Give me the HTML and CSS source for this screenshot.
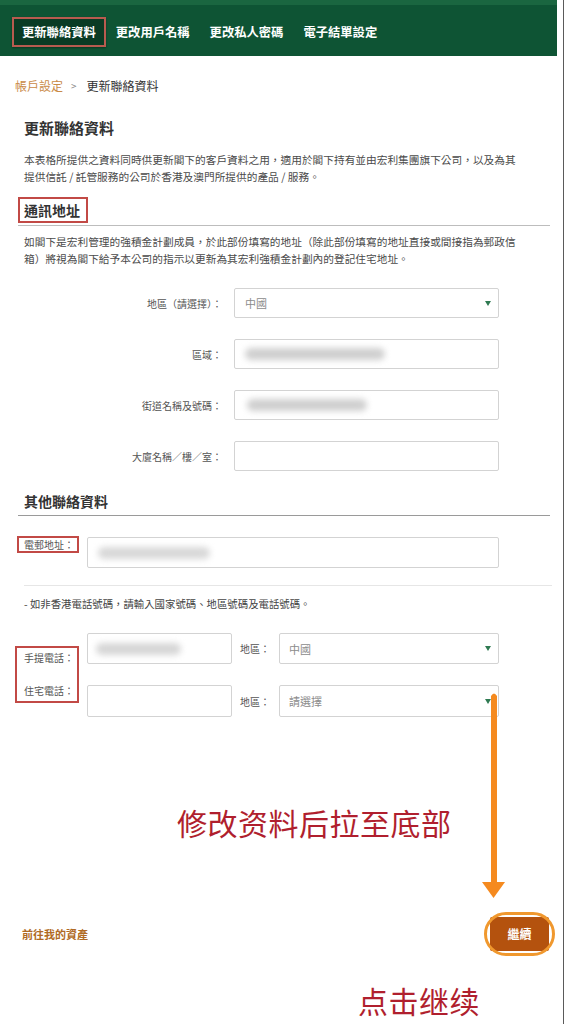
FILE: index.html
```html
<!DOCTYPE html>
<html lang="zh-Hant">
<head>
<meta charset="utf-8">
<title>更新聯絡資料</title>
<link rel="stylesheet" href="styles.css">
</head>
<body>
<div class="page">
  <nav class="nav">
    <span class="tab active">更新聯絡資料</span>
    <span class="tab">更改用戶名稱</span>
    <span class="tab">更改私人密碼</span>
    <span class="tab">電子結單設定</span>
  </nav>

  <div class="crumb"><span class="crumb-link">帳戶設定</span><span class="crumb-sep">&gt;</span><span class="crumb-cur">更新聯絡資料</span></div>

  <main class="content">
    <h1 class="title">更新聯絡資料</h1>
    <p class="para p1">本表格所提供之資料同時供更新閣下的客戶資料之用，適用於閣下持有並由宏利集團旗下公司，以及為其<br>提供信託 / 託管服務的公司於香港及澳門所提供的產品 / 服務。</p>

    <div class="sec-head first"><span class="sec-box">通訊地址</span></div>
    <p class="para p2">如閣下是宏利管理的強積金計劃成員，於此部份填寫的地址（除此部份填寫的地址直接或間接指為郵政信<br>箱）將視為閣下給予本公司的指示以更新為其宏利強積金計劃內的登記住宅地址。</p>

    <div class="addr">
      <div class="row"><span class="lbl">地區（請選擇）：</span><div class="field select"><span class="val">中國</span><span class="caret"></span></div></div>
      <div class="row"><span class="lbl">區域：</span><div class="field"><span class="blur w140"></span></div></div>
      <div class="row"><span class="lbl">街道名稱及號碼：</span><div class="field"><span class="blur w120 shift"></span></div></div>
      <div class="row"><span class="lbl">大廈名稱／樓／室：</span><div class="field"></div></div>
    </div>

    <div class="sec-head second"><span class="sec-plain">其他聯絡資料</span></div>

    <div class="email-row">
      <span class="mark-box email-lbl">電郵地址：</span>
      <div class="field email"><span class="blur w112 deep"></span></div>
    </div>

    <div class="sep"></div>
    <p class="note">- 如非香港電話號碼，請輸入國家號碼、地區號碼及電話號碼。</p>

    <div class="phones">
      <div class="mark-box phone-lbls">
        <span>手提電話：</span>
        <span>住宅電話：</span>
      </div>
      <div class="phone-rows">
        <div class="prow">
          <div class="field tel"><span class="blur w85 deep2"></span></div>
          <span class="area">地區：</span>
          <div class="field select psel"><span class="val">中國</span><span class="caret"></span></div>
        </div>
        <div class="prow">
          <div class="field tel"></div>
          <span class="area">地區：</span>
          <div class="field select psel"><span class="val">請選擇</span><span class="caret"></span></div>
        </div>
      </div>
    </div>

    <div class="footer">
      <span class="back">前往我的資產</span>
      <span class="btn">繼續</span>
    </div>
  </main>

  <svg class="arrow" width="32" height="212" viewBox="0 0 32 212">
    <path d="M13 6 Q16 1 19 6 L19 194 L13 194 Z" fill="#f58a1f"/>
    <path d="M4 192 L27 192 L15.5 208 Z" fill="#f58a1f"/>
  </svg>
  <div class="ring"></div>
  <div class="note-a">修改资料后拉至底部</div>
  <div class="note-b">点击继续</div>
</div>
</body>
</html>
```

FILE: styles.css
```css
* { box-sizing: border-box; margin: 0; padding: 0; }

html, body { background: #fff; }

body {
  font-family: "Noto Sans CJK TC", "Noto Sans CJK SC", "Liberation Sans", sans-serif;
  color: #333;
}

.page {
  position: relative;
  width: 564px;
  height: 1024px;
  border-right: 1px solid #5a5a5a;
  overflow: hidden;
}

/* top navigation */
.nav {
  width: 557px;
  height: 56px;
  background: #0e5434;
  border-top: 5px solid #1a6640;
  display: flex;
  align-items: flex-start;
  padding: 12px 0 0 12px;
}
.tab {
  height: 30px;
  line-height: 30px;
  padding: 0 10px;
  font-size: 12.3px;
  font-weight: 700;
  color: #fff;
  white-space: nowrap;
}
.tab.active {
  border: 2px solid #b85b4f;
  background: #0a3b24;
  padding: 0 8px;
  line-height: 26px;
  box-shadow: 0 1px 2px rgba(0,0,0,.35);
}

/* breadcrumb */
.crumb {
  margin-top: 21px;
  padding-left: 15px;
  font-size: 12px;
  line-height: 18px;
  display: flex;
}
.crumb-link { color: #c98a46; }
.crumb-sep { color: #888; margin: 0 10px 0 8px; font-size: 10px; }
.crumb-cur { color: #333; }

/* content */
.content {
  padding: 0 13px 0 18px;
}
.title {
  margin-top: 23px;
  padding-left: 6px;
  font-size: 15px;
  line-height: 20px;
  font-weight: 700;
  color: #333;
}
.para {
  padding-left: 6px;
  font-size: 10.7px;
  line-height: 17px;
  color: #4a4a4a;
  white-space: nowrap;
}
.p1 { margin-top: 13px; }
.p2 { margin-top: 7px; }

.sec-head {
  border-bottom: 1px solid #bdbdbd;
}
.sec-head.first {
  margin-top: 12px;
  padding-bottom: 2px;
}
.sec-box {
  display: inline-block;
  height: 26px;
  line-height: 22px;
  padding: 0 6px 0 4px;
  border: 2px solid #c24a46;
  font-size: 14px;
  font-weight: 700;
  color: #333;
}
.sec-head.second {
  margin-top: 20px;
  padding: 0 0 4px 6px;
  border-bottom-color: #9a9a9a;
}
.sec-plain {
  display: block;
  font-size: 14px;
  line-height: 20px;
  font-weight: 700;
  color: #333;
}

/* address form */
.addr {
  margin-top: 21px;
  display: flex;
  flex-direction: column;
  gap: 21px;
}
.row {
  display: flex;
  align-items: center;
}
.lbl {
  width: 204px;
  text-align: right;
  font-size: 10px;
  color: #555;
  margin-right: 12px;
  white-space: nowrap;
}
.field {
  width: 265px;
  height: 30px;
  border: 1px solid #d3d3d3;
  border-radius: 2px;
  background: #fff;
  display: flex;
  align-items: center;
  padding: 0 7px 0 10px;
}
.select {
  justify-content: space-between;
}
.val {
  font-size: 11px;
  color: #8c8c8c;
}
.caret {
  width: 0;
  height: 0;
  border-left: 3px solid transparent;
  border-right: 3px solid transparent;
  border-top: 5px solid #2f7a52;
}
.blur {
  display: block;
  height: 12px;
  background: #cfcfcf;
  border-radius: 6px;
  filter: blur(3px);
}
.blur.deep { background: #d8d8d8; }
.blur.deep2 { background: #d6d6d6; }
.blur.shift { margin-left: 2px; }
.w140 { width: 140px; }
.w120 { width: 120px; }
.w112 { width: 112px; }
.w85 { width: 85px; }

/* email */
.email-row {
  margin-top: 20px;
  display: flex;
  align-items: flex-start;
}
.mark-box {
  border: 2px solid #c24a46;
}
.email-lbl {
  margin-left: -1px;
  width: 62px;
  height: 17px;
  line-height: 13px;
  padding: 0 3px;
  text-align: right;
  font-size: 10px;
  color: #555;
  white-space: nowrap;
}
.field.email {
  width: 412px;
  height: 31px;
  margin: 1px 0 0 8px;
}

.sep {
  margin: 17px -2px 0 6px;
  border-top: 1px solid #e6e6e6;
}
.note {
  margin-top: 10px;
  padding-left: 6px;
  font-size: 10.4px;
  line-height: 16px;
  color: #444;
  white-space: nowrap;
}

/* phones */
.phones {
  margin-top: 21px;
  display: flex;
  align-items: flex-start;
}
.phone-lbls {
  margin: 13px 0 0 -3px;
  width: 64px;
  padding: 3px 3px 3px 0;
  display: flex;
  flex-direction: column;
  align-items: flex-end;
  gap: 19px;
  font-size: 10px;
  line-height: 14px;
  color: #555;
}
.phone-rows {
  margin-left: 8px;
  display: flex;
  flex-direction: column;
  gap: 21px;
}
.prow {
  display: flex;
  align-items: center;
}
.field.tel {
  width: 145px;
  height: 31px;
  padding-left: 8px;
}
.area {
  width: 47px;
  padding-left: 8px;
  font-size: 10px;
  color: #555;
}
.field.psel {
  width: 220px;
  height: 31px;
  padding-left: 9px;
}
.prow + .prow .field { height: 32px; }

/* footer */
.footer {
  margin-top: 200px;
  display: flex;
  justify-content: space-between;
  align-items: center;
  padding: 0 1px 0 4px;
}
.back {
  font-size: 11px;
  font-weight: 700;
  color: #b06a24;
}
.btn {
  width: 59px;
  height: 34px;
  line-height: 34px;
  text-align: center;
  background: #b4520e;
  color: #fff;
  font-size: 12px;
  font-weight: 700;
  border-radius: 2px;
}

/* annotation overlays */
.arrow {
  position: absolute;
  left: 478px;
  top: 690px;
}
.ring {
  position: absolute;
  left: 484px;
  top: 912px;
  width: 71px;
  height: 44px;
  border: 3px solid #f0982e;
  border-radius: 22px;
}
.note-a, .note-b {
  position: absolute;
  font-family: "Noto Sans CJK SC", sans-serif;
  font-size: 30px;
  line-height: 30px;
  color: #b01f2e;
  letter-spacing: 0.5px;
  white-space: nowrap;
}
.note-a { left: 177px; top: 807px; }
.note-b { left: 358px; top: 985px; }
```
